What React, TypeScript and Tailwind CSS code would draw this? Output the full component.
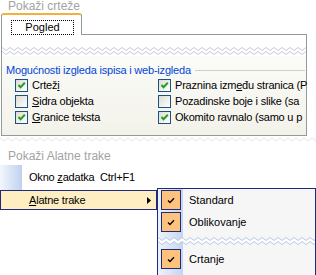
const zig = (w: number, period: number, amp: number, y0: number) => {
  const pts: [number, number][] = [];
  for (let x = 0, i = 0; x <= w + period; x += period / 2, i++) {
    pts.push([x, y0 + (i % 2 ? amp : 0)]);
  }
  return pts;
};

function Wave({ width, height, color, fill }: { width: number; height: number; color: string; fill: string }) {
  const top = zig(width, 8, 3, 1.5);
  const bottom = zig(width, 8, 3, height - 4.5);
  const band = [...top, ...[...bottom].reverse()].map((p) => p.join(",")).join(" ");
  return (
    <svg width={width} height={height} className="block">
      <polygon points={band} fill={fill} />
      <polyline points={top.map((p) => p.join(",")).join(" ")} fill="none" stroke={color} strokeWidth={1} />
      <polyline points={bottom.map((p) => p.join(",")).join(" ")} fill="none" stroke={color} strokeWidth={1} />
    </svg>
  );
}

function XpCheck({ checked }: { checked: boolean }) {
  return (
    <span className="w-[13px] h-[13px] shrink-0 border border-[#1c5180] bg-linear-to-br from-[#dcdcd7] to-white flex items-center justify-center">
      {checked && (
        <svg width="9" height="9" viewBox="0 0 9 9">
          <path d="M1.5 4 L3.5 6.2 L7.8 1.8" stroke="#21a121" strokeWidth="2" fill="none" />
        </svg>
      )}
    </span>
  );
}

function MenuCheck() {
  return (
    <span className="w-[20px] h-[20px] shrink-0 border border-[#1f2b7a] bg-[#ffc27d] flex items-center justify-center">
      <svg width="8" height="7" viewBox="0 0 8 7">
        <path d="M1 3.5 L3 5.5 L7 1.2" stroke="black" strokeWidth="1.3" fill="none" />
      </svg>
    </span>
  );
}

// the right column is cut off by the panel edge in the original dialog
const options = [
  { label: "Crteži", key: 5, checked: true },
  { label: "Praznina između stranica (P", key: 12, checked: true },
  { label: "Sidra objekta", key: 0, checked: false },
  { label: "Pozadinske boje i slike (sa", key: -1, checked: false },
  { label: "Granice teksta", key: 0, checked: true },
  { label: "Okomito ravnalo (samo u p", key: -1, checked: true },
];

function Label({ text, k }: { text: string; k: number }) {
  if (k < 0) return <>{text}</>;
  return (
    <>
      {text.slice(0, k)}
      <span className="underline">{text[k]}</span>
      {text.slice(k + 1)}
    </>
  );
}

export default function App() {
  return (
    <div className="w-[316px] h-[275px] overflow-hidden bg-white text-[11px] text-black font-['Liberation_Sans',Arial,sans-serif]">
      <div className="h-[13px] pl-[8px] text-[12px] leading-[13px] text-[#a3a3a3]">Pokaži crteže</div>

      <div className="ml-[1px] w-[306px]">
        <div className="flex items-end h-[22px]">
          <div className="w-[81px] h-[22px] bg-white border-x border-t-2 border-[#919b9c] border-t-[#f2b13c] rounded-t-[3px]">
            <div className="mt-[5px] ml-[9px] w-[63px] h-[15px] border border-dotted border-black flex items-center justify-center leading-none">
              Pogled
            </div>
          </div>
          <div className="flex-1 h-full border-b border-[#919b9c]" />
        </div>

        <div className="h-[101px] border-x border-b border-[#919b9c]">
          <div className="h-[11px] bg-white" />
          <div className="bg-white">
            <Wave width={304} height={10} color="#c5cbd8" fill="#ffffff" />
          </div>
          <div className="h-[79px] bg-linear-to-b from-[#fbfbf8] to-[#f3f2ea]">
            <div className="pt-[7px] pl-[4px] pr-[1px] flex items-center h-[21px]">
              <span className="text-[#0046d5] tracking-[-0.2px] whitespace-nowrap">Mogućnosti izgleda ispisa i web-izgleda</span>
              <span className="flex-1 h-px bg-[#d0d0bf] ml-[4px]" />
            </div>
            <div className="grid grid-cols-[143px_148px] pl-[13px]">
              {options.map((o) => (
                <div key={o.label} className="h-[16px] flex items-center gap-[4px] whitespace-nowrap tracking-[-0.2px]">
                  <XpCheck checked={o.checked} />
                  <span>
                    <Label text={o.label} k={o.key} />
                  </span>
                </div>
              ))}
            </div>
          </div>
        </div>
      </div>

      <div className="h-[8px] pt-[1px] opacity-50">
        <Wave width={316} height={5} color="#e2e2e2" fill="#ffffff" />
      </div>
      <div className="mt-[5px] h-[14px] pl-[8px] text-[12px] leading-[14px] text-[#a3a3a3]">Pokaži Alatne trake</div>

      <div className="mt-[2px] flex items-start">
        <div className="w-[157px] flex flex-col">
          <div className="h-[25px] flex items-center">
            <div className="w-[22px] h-full bg-linear-to-r from-[#f4f7fc] to-[#bfd1ef]" />
            <span className="ml-[7px] w-[71px] tracking-[-0.2px]">
              Okno <span className="underline">z</span>adatka
            </span>
            <span className="tracking-[-0.2px]">Ctrl+F1</span>
          </div>
          <div className="h-[20px] border border-[#1f2b7a] bg-[#ffeec2] flex items-center">
            <span className="ml-[28px] flex-1 tracking-[-0.2px]">
              <span className="underline">A</span>latne trake
            </span>
            <svg width="4" height="7" viewBox="0 0 4 7" className="mr-[5px]">
              <path d="M0 0 L4 3.5 L0 7 Z" fill="black" />
            </svg>
          </div>
        </div>

        <div className="mt-[23px] w-[159px] h-[100px] border border-[#1f2b7a] bg-[linear-gradient(to_right,#eef3fb_0px,#c4d5f0_25px,#f6f6f6_25px)]">
          {["Standard", "Oblikovanje"].map((t) => (
            <div key={t} className="h-[22px] pl-[3px] flex items-center">
              <MenuCheck />
              <span className="ml-[8px]">{t}</span>
            </div>
          ))}
          <div className="h-[15px] flex items-center">
            <Wave width={157} height={10} color="#b7c7e6" fill="#ffffff" />
          </div>
          <div className="h-[22px] pl-[3px] flex items-center">
            <MenuCheck />
            <span className="ml-[8px]">Crtanje</span>
          </div>
        </div>
      </div>
    </div>
  );
}
